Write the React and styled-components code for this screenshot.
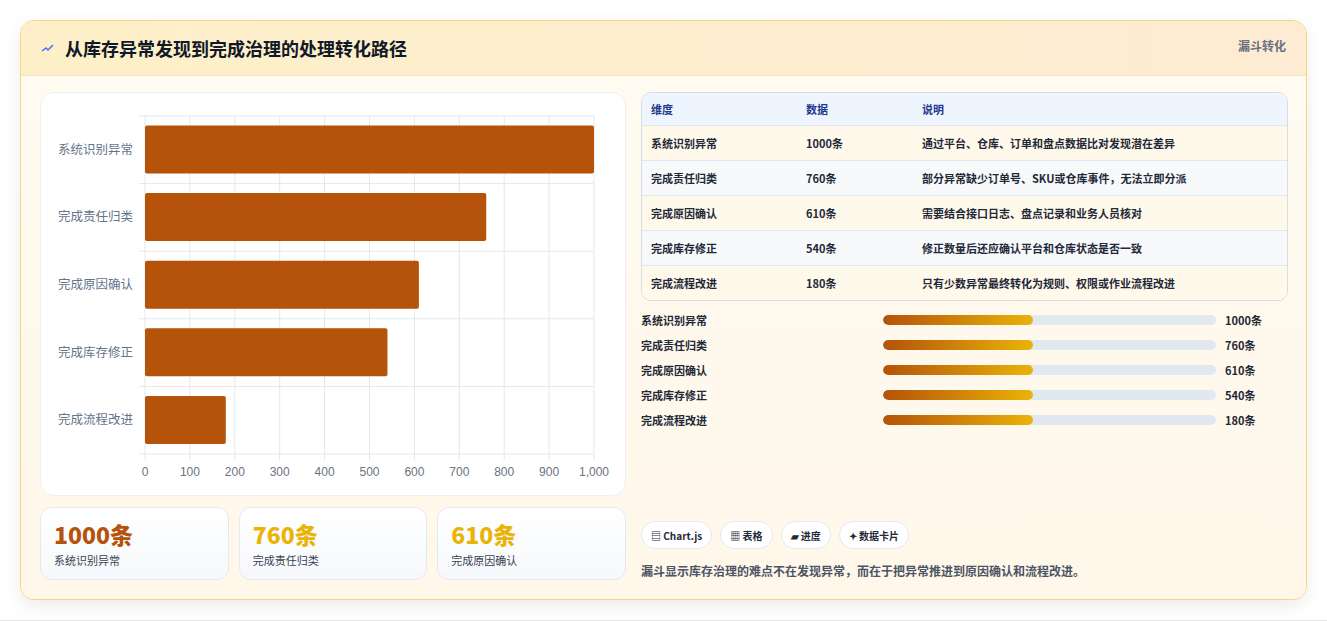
import React from 'react';
import styled, { createGlobalStyle } from 'styled-components';

const GlobalStyle = createGlobalStyle`
  body {
    margin: 0;
    background: #f1f1f1;
    font-family: "Noto Sans CJK SC", "Liberation Sans", sans-serif;
  }
`;

const Page = styled.div`
  height: 621px;
  padding: 20px 20px 0 20px;
  box-sizing: border-box;
  background: #fff;
  border-bottom: 1px solid #e5e5e5;
`;

const Card = styled.div`
  width: 1287px;
  height: 580px;
  box-sizing: border-box;
  border: 1px solid #f6d77a;
  border-radius: 14px;
  background: #fff8ec;
  box-shadow: 0 6px 18px rgba(0, 0, 0, 0.08);
  overflow: hidden;
  display: flex;
  flex-direction: column;
`;

const Header = styled.div`
  height: 55px;
  flex-shrink: 0;
  box-sizing: border-box;
  display: flex;
  align-items: center;
  justify-content: space-between;
  padding: 0 20px;
  background: linear-gradient(90deg, #fdf0c8, #fdebd3);
  border-bottom: 1px solid #f4e3c0;
`;

const Title = styled.h1`
  margin: 0;
  font-size: 18px;
  font-weight: 700;
  color: #111827;
  display: flex;
  align-items: center;
  gap: 10px;
`;

const Tag = styled.span`
  align-self: flex-start;
  margin-top: 16px;
  font-size: 12px;
  font-weight: 700;
  color: #6b7280;
`;

const Body = styled.div`
  flex: 1;
  display: grid;
  grid-template-columns: 586px 647px;
  gap: 15px;
  padding: 16px 19px 18px 19px;
  background: linear-gradient(180deg, #fffbf0, #fff7ea);
`;

const Column = styled.div`
  display: flex;
  flex-direction: column;
  gap: 11px;
`;

const ChartPanel = styled.div`
  height: 404px;
  box-sizing: border-box;
  background: #fff;
  border: 1px solid #eceff3;
  border-radius: 14px;
`;

const Stats = styled.div`
  display: grid;
  grid-template-columns: repeat(3, 1fr);
  gap: 10px;
`;

const Stat = styled.div`
  height: 73px;
  box-sizing: border-box;
  padding: 10px 13px;
  border: 1px solid #e5e9f0;
  border-radius: 12px;
  background: linear-gradient(180deg, #fff, #f6f8fb);
`;

const StatValue = styled.div`
  font-size: 23px;
  font-weight: 800;
  line-height: 32px;
  color: ${p => p.color};
`;

const StatLabel = styled.div`
  font-size: 11px;
  color: #374151;
  margin-top: 2px;
`;

const Table = styled.div`
  border: 1px solid #d6dde7;
  border-radius: 10px;
  overflow: hidden;
  background: #fff;
`;

const Row = styled.div`
  display: grid;
  grid-template-columns: 155px 116px 1fr;
  height: ${p => (p.head ? 32 : 34)}px;
  align-items: center;
  padding-left: 9px;
  font-size: 11px;
  font-weight: ${p => (p.head ? 700 : 600)};
  color: ${p => (p.head ? '#1e3a8a' : '#1f2937')};
  background: ${p => (p.head ? '#eef5ff' : p.alt ? '#f7f9fb' : '#fff9ec')};
  border-top: ${p => (p.head ? 'none' : '1px solid #e2e8f0')};
`;

const Bars = styled.div`
  display: flex;
  flex-direction: column;
  gap: 9px;
  margin-top: 0;
`;

const BarRow = styled.div`
  display: grid;
  grid-template-columns: 242px 342px 1fr;
  align-items: center;
  height: 16px;
  font-size: 11px;
  font-weight: 700;
  color: #1f2937;
`;

const Track = styled.div`
  height: 10px;
  border-radius: 5px;
  background: #e2e8f0;
  margin-right: 9px;
  overflow: hidden;
`;

const Fill = styled.div`
  height: 100%;
  border-radius: 5px;
  background: linear-gradient(90deg, #b45309, #eab308);
`;

const Spacer = styled.div`
  flex: 1;
`;

const Chips = styled.div`
  display: flex;
  gap: 8px;
`;

const Chip = styled.span`
  height: 28px;
  box-sizing: border-box;
  padding: 0 9px;
  display: flex;
  align-items: center;
  gap: 4px;
  border: 1px solid #e5e9f0;
  border-radius: 14px;
  background: #fff;
  font-size: 10px;
  font-weight: 700;
  color: #1f2937;
`;

const Note = styled.p`
  margin: 2px 0 2px 0;
  font-size: 12px;
  font-weight: 600;
  color: #4b5563;
`;

const data = [
  { name: '系统识别异常', v: 1000, desc: '通过平台、仓库、订单和盘点数据比对发现潜在差异' },
  { name: '完成责任归类', v: 760, desc: '部分异常缺少订单号、SKU或仓库事件，无法立即分派' },
  { name: '完成原因确认', v: 610, desc: '需要结合接口日志、盘点记录和业务人员核对' },
  { name: '完成库存修正', v: 540, desc: '修正数量后还应确认平台和仓库状态是否一致' },
  { name: '完成流程改进', v: 180, desc: '只有少数异常最终转化为规则、权限或作业流程改进' },
];

const Chart = () => {
  const x0 = 104, x1 = 553, y0 = 23, y1 = 361;
  const sx = v => x0 + ((x1 - x0) * v) / 1000;
  const step = (y1 - y0) / 5;
  const ticks = [0, 100, 200, 300, 400, 500, 600, 700, 800, 900, 1000];
  return (
    <svg width="586" height="404" viewBox="0 0 586 404">
      {ticks.map(t => (
        <g key={t}>
          <line x1={sx(t)} x2={sx(t)} y1={y0} y2={y1 + 6} stroke="#e5e7eb" />
          <text x={sx(t)} y={383} fontSize="12" fill="#6b7280" textAnchor="middle" fontFamily="Liberation Sans">
            {t === 1000 ? '1,000' : t}
          </text>
        </g>
      ))}
      {[0, 1, 2, 3, 4, 5].map(i => (
        <line key={i} x1={x0 - 6} x2={x1} y1={y0 + i * step} y2={y0 + i * step} stroke="#e5e7eb" />
      ))}
      {data.map((d, i) => (
        <g key={d.name}>
          <rect x={x0} y={y0 + i * step + 9.5} width={sx(d.v) - x0} height={48} rx="2" fill="#b45309" />
          <text x={x0 - 12} y={y0 + i * step + step / 2 + 4} fontSize="12.5" fill="#64748b" textAnchor="end">
            {d.name}
          </text>
        </g>
      ))}
    </svg>
  );
};

export default function App() {
  return (
    <Page>
      <GlobalStyle />
      <Card>
        <Header>
          <Title>
            <svg width="14" height="10" viewBox="0 0 14 10">
              <path d="M1 8 L5 5 L7 7 L12 2" stroke="#4f6ef7" strokeWidth="1.5" fill="none" />
            </svg>
            从库存异常发现到完成治理的处理转化路径
          </Title>
          <Tag>漏斗转化</Tag>
        </Header>
        <Body>
          <Column>
            <ChartPanel>
              <Chart />
            </ChartPanel>
            <Stats>
              <Stat><StatValue color="#b45309">1000条</StatValue><StatLabel>系统识别异常</StatLabel></Stat>
              <Stat><StatValue color="#eab308">760条</StatValue><StatLabel>完成责任归类</StatLabel></Stat>
              <Stat><StatValue color="#eab308">610条</StatValue><StatLabel>完成原因确认</StatLabel></Stat>
            </Stats>
          </Column>
          <Column>
            <Table>
              <Row head><span>维度</span><span>数据</span><span>说明</span></Row>
              {data.map((d, i) => (
                <Row key={d.name} alt={i % 2 === 1}>
                  <span>{d.name}</span><span>{d.v}条</span><span>{d.desc}</span>
                </Row>
              ))}
            </Table>
            <Bars>
              {data.map(d => (
                <BarRow key={d.name}>
                  <span>{d.name}</span>
                  <Track><Fill style={{ width: '45%' }} /></Track>
                  <span>{d.v}条</span>
                </BarRow>
              ))}
            </Bars>
            <Spacer />
            <Chips>
              <Chip>▤ Chart.js</Chip>
              <Chip>▦ 表格</Chip>
              <Chip>▰ 进度</Chip>
              <Chip>✦ 数据卡片</Chip>
            </Chips>
            <Note>漏斗显示库存治理的难点不在发现异常，而在于把异常推进到原因确认和流程改进。</Note>
          </Column>
        </Body>
      </Card>
    </Page>
  );
}
